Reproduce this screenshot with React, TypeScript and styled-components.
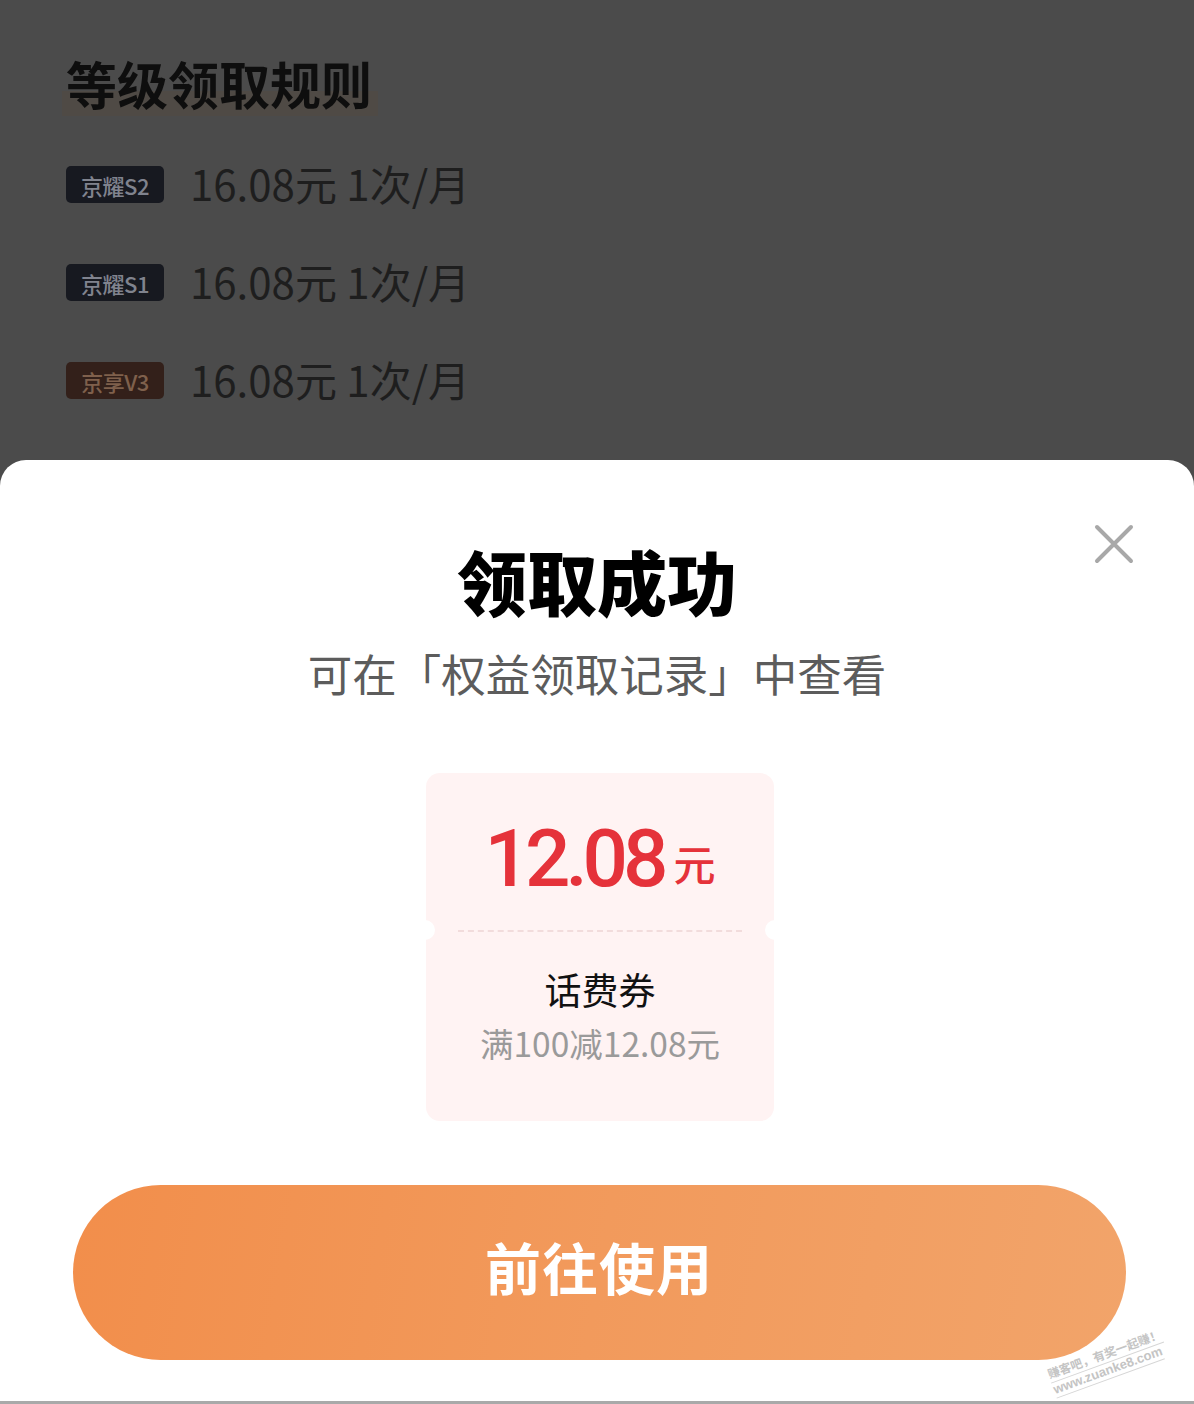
import React from "react";
import styled, { createGlobalStyle } from "styled-components";

const GlobalStyle = createGlobalStyle`
  html, body {
    margin: 0;
    padding: 0;
    background: #4b4b4b;
  }
  body {
    font-family: "Noto Sans CJK SC", "Noto Sans", sans-serif;
  }
`;

const Page = styled.div`
  width: 1194px;
  height: 1404px;
  display: flex;
  flex-direction: column;
  background: #4b4b4b;
  overflow: hidden;
`;

const Rules = styled.div`
  height: 460px;
  box-sizing: border-box;
  padding: 50px 66px 0;
  display: flex;
  flex-direction: column;
  align-items: flex-start;
`;

const RulesTitle = styled.h2`
  margin: 0 0 20px -4px;
  padding: 0 6px 0 4px;
  font-size: 51px;
  line-height: 66px;
  font-weight: 700;
  color: #0e0e0e;
  background: linear-gradient(to bottom, transparent 62%, #4f4a45 62%);
`;

const RuleRow = styled.div`
  height: 99px;
  display: flex;
  align-items: center;
  gap: 26px;
  margin-top: -1px;
`;

const Badge = styled.span<{ tone: "dark" | "brown" }>`
  width: 98px;
  height: 37px;
  box-sizing: border-box;
  border-radius: 5px;
  display: flex;
  align-items: center;
  justify-content: center;
  font-size: 22px;
  font-weight: 500;
  letter-spacing: -0.5px;
  background: ${({ tone }) => (tone === "dark" ? "#171920" : "#33201a")};
  color: ${({ tone }) => (tone === "dark" ? "#80838e" : "#7f604c")};
`;

const RuleValue = styled.span`
  font-size: 42px;
  line-height: 1;
  color: #1e1e1e;
  font-weight: 400;
  margin-top: -4px;
`;

const Sheet = styled.div`
  flex: 1;
  position: relative;
  background: #fff;
  border-radius: 26px 26px 0 0;
  display: flex;
  flex-direction: column;
  align-items: center;
  padding-top: 76px;
  border-bottom: 3px solid #a9a9a9;
`;

const CloseButton = styled.button`
  position: absolute;
  top: 62px;
  right: 58px;
  width: 44px;
  height: 44px;
  padding: 0;
  border: 0;
  background: transparent;
  color: #a8a8a8;
  cursor: pointer;
`;

const Title = styled.h1`
  margin: 0;
  font-size: 70px;
  line-height: 90px;
  font-weight: 900;
  color: #000;
`;

const Subtitle = styled.p`
  margin: 17px 0 0;
  font-size: 44.5px;
  line-height: 60px;
  color: #5c5c5c;
`;

const Coupon = styled.div`
  margin: 70px 0 0 6px;
  width: 348px;
  height: 348px;
  position: relative;
  border-radius: 14px;
  background: #fff3f3;
  display: flex;
  flex-direction: column;

  &::before,
  &::after {
    content: "";
    position: absolute;
    top: 147px;
    width: 20px;
    height: 20px;
    border-radius: 50%;
    background: #fff;
  }
  &::before {
    left: -11px;
  }
  &::after {
    right: -11px;
  }
`;

const CouponTop = styled.div`
  height: 157px;
  box-sizing: border-box;
  padding-top: 14px;
  display: flex;
  align-items: center;
  justify-content: center;
  gap: 10px;
  color: #e5323a;
`;

const Amount = styled.span`
  font-family: Roboto, "Noto Sans", sans-serif;
  font-size: 80px;
  font-weight: 500;
  letter-spacing: -5px;
  line-height: 1;
`;

const Unit = styled.span`
  font-size: 42px;
  font-weight: 500;
  line-height: 1;
  align-self: flex-end;
  margin-bottom: 46px;
`;

const Divider = styled.div`
  margin: 0 32px;
  border-top: 2px dashed #f2dcdc;
`;

const CouponBottom = styled.div`
  flex: 1;
  display: flex;
  flex-direction: column;
  align-items: center;
  padding-top: 32px;
`;

const CouponName = styled.span`
  font-size: 37px;
  line-height: 50px;
  color: #111;
`;

const CouponRule = styled.span`
  margin-top: 6px;
  font-size: 33.5px;
  line-height: 46px;
  color: #9a9a9a;
`;

const UseButton = styled.button`
  margin-top: 64px;
  margin-left: 4px;
  width: 1053px;
  height: 175px;
  padding: 0 0 14px;
  border: 0;
  border-radius: 88px;
  background: linear-gradient(100deg, #f28e4b 0%, #f29a5c 50%, #f2a46a 100%);
  color: #fff;
  font-family: "Noto Sans CJK SC", sans-serif;
  font-size: 56px;
  font-weight: 700;
  letter-spacing: 1px;
  cursor: pointer;
`;

const Watermark = styled.div`
  position: absolute;
  right: 26px;
  bottom: 22px;
  transform: rotate(-20deg);
  display: flex;
  flex-direction: column;
  align-items: flex-start;
  color: #c4c4c4;
  font-family: "Liberation Sans", "Noto Sans CJK SC", sans-serif;
  font-weight: 700;
  line-height: 1.1;
`;

const WatermarkLine = styled.span<{ size: number }>`
  font-size: ${({ size }) => size}px;
  border-bottom: 1px solid #d6d6d6;
  padding-bottom: 1px;
`;

const levels = [
  { name: "京耀S2", tone: "dark" as const },
  { name: "京耀S1", tone: "dark" as const },
  { name: "京享V3", tone: "brown" as const },
];

export default function App() {
  return (
    <>
      <GlobalStyle />
      <Page>
        <Rules>
          <RulesTitle>等级领取规则</RulesTitle>
          {levels.map((l) => (
            <RuleRow key={l.name}>
              <Badge tone={l.tone}>{l.name}</Badge>
              <RuleValue>16.08元 1次/月</RuleValue>
            </RuleRow>
          ))}
        </Rules>
        <Sheet>
          <CloseButton aria-label="关闭">
            <svg width="44" height="44" viewBox="0 0 44 44">
              <path
                d="M5 5 L39 39 M39 5 L5 39"
                stroke="currentColor"
                strokeWidth="4"
                strokeLinecap="round"
              />
            </svg>
          </CloseButton>
          <Title>领取成功</Title>
          <Subtitle>可在「权益领取记录」中查看</Subtitle>
          <Coupon>
            <CouponTop>
              <Amount>12.08</Amount>
              <Unit>元</Unit>
            </CouponTop>
            <Divider />
            <CouponBottom>
              <CouponName>话费券</CouponName>
              <CouponRule>满100减12.08元</CouponRule>
            </CouponBottom>
          </Coupon>
          <UseButton>前往使用</UseButton>
          <Watermark>
            <WatermarkLine size={12}>赚客吧，有奖一起赚！</WatermarkLine>
            <WatermarkLine size={13}>www.zuanke8.com</WatermarkLine>
          </Watermark>
        </Sheet>
      </Page>
    </>
  );
}
